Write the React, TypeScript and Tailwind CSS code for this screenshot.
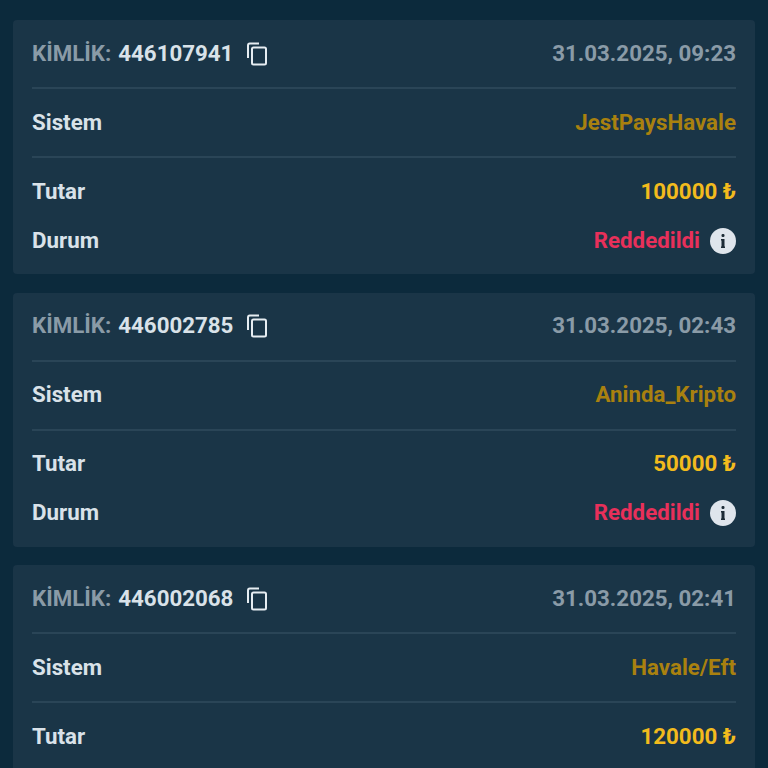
type Tx = {
  id: string;
  date: string;
  system: string;
  amount: string;
};

const rows: Tx[] = [
  { id: "446107941", date: "31.03.2025, 09:23", system: "JestPaysHavale", amount: "100000" },
  { id: "446002785", date: "31.03.2025, 02:43", system: "Aninda_Kripto", amount: "50000" },
  { id: "446002068", date: "31.03.2025, 02:41", system: "Havale/Eft", amount: "120000" },
];

function CopyIcon() {
  return (
    <svg width="22" height="24" viewBox="0 0 22 24" fill="none" stroke="#e6edf2" strokeWidth="2" className="ml-[13px] shrink-0">
      <path d="M2 16V3.5C2 2.4 2.6 1.5 3.8 1.5H13" />
      <rect x="6" y="5.5" width="14" height="17" rx="1.5" />
    </svg>
  );
}

function InfoIcon() {
  return (
    <div className="ml-[10px] flex h-[26px] w-[26px] items-center justify-center rounded-full bg-[#dfe5ec]">
      <svg width="6" height="14" viewBox="0 0 6 14" fill="#1d2b36">
        <rect x="1.5" y="0" width="3" height="3" rx="1.2" />
        <path d="M1 5H4.5V12.5H5V14H1V12.5H1.5V6.5H1Z" />
      </svg>
    </div>
  );
}

function Card({ tx }: { tx: Tx }) {
  return (
    <div className="mb-[18.5px] rounded-[4px] bg-[#1a3547] px-[19px] pb-[10px]">
      <div className="flex h-[69px] items-center justify-between border-b-2 border-[#2a4557]">
        <div className="flex items-center">
          <span className="text-[#8a9ba7]">KİMLİK:</span>
          <span className="ml-[7px] text-[#d9e2e9]">{tx.id}</span>
          <CopyIcon />
        </div>
        <span className="text-[#8a9ba7]">{tx.date}</span>
      </div>
      <div className="flex h-[69px] items-center justify-between border-b-2 border-[#2a4557]">
        <span className="text-[#d9e2e9]">Sistem</span>
        <span className="text-[#a9810f]">{tx.system}</span>
      </div>
      <div className="flex h-[67px] items-center justify-between">
        <span className="text-[#d9e2e9]">Tutar</span>
        <span className="text-[#f2bb1d]">{tx.amount} ₺</span>
      </div>
      <div className="-mt-[8px] flex h-[47px] items-center justify-between">
        <span className="text-[#d9e2e9]">Durum</span>
        <div className="flex items-center">
          <span className="text-[#e8305a]">Reddedildi</span>
          <InfoIcon />
        </div>
      </div>
    </div>
  );
}

export default function App() {
  return (
    <div className="h-[768px] overflow-hidden bg-[#0c2a3c] px-[13px] pt-[20px] font-['Roboto',sans-serif] text-[22.3px] font-bold">
      {rows.map((tx) => (
        <Card key={tx.id} tx={tx} />
      ))}
    </div>
  );
}
